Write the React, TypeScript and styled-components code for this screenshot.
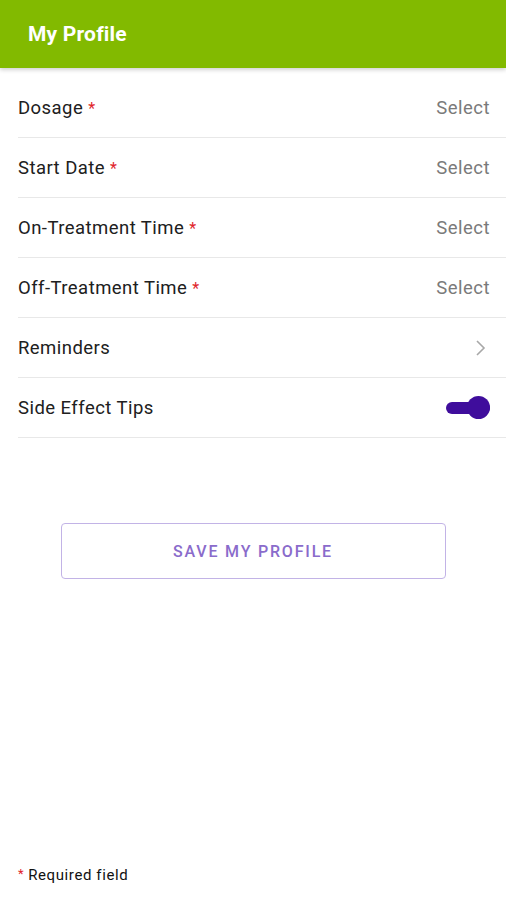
import * as React from "react";
import styled, { createGlobalStyle } from "styled-components";

const GlobalStyle = createGlobalStyle`
  html, body {
    margin: 0;
    padding: 0;
    background: #ffffff;
    font-family: Roboto, "Liberation Sans", sans-serif;
  }
  #root {
    min-height: 900px;
  }
`;

const rows: { label: string; required?: boolean; kind: "select" | "link" | "toggle" }[] = [
  { label: "Dosage", required: true, kind: "select" },
  { label: "Start Date", required: true, kind: "select" },
  { label: "On-Treatment Time", required: true, kind: "select" },
  { label: "Off-Treatment Time", required: true, kind: "select" },
  { label: "Reminders", kind: "link" },
  { label: "Side Effect Tips", kind: "toggle" },
];

const App: React.FC = () => {
  const [tips, setTips] = React.useState(true);

  return (
    <>
      <GlobalStyle />
      <Page>
        <Header>
          <Title>My Profile</Title>
        </Header>
        <List>
          {rows.map(({ label, required, kind }) => (
            <Row key={label}>
              <Label>
                {label}
                {required && <Star>*</Star>}
              </Label>
              {kind === "select" && <Value>Select</Value>}
              {kind === "link" && (
                <Chevron width="14" height="20" viewBox="0 0 14 20">
                  <path d="M3 3 L10 10 L3 17" fill="none" stroke="#a8a8a8" strokeWidth="1.6" />
                </Chevron>
              )}
              {kind === "toggle" && (
                <Switch on={tips} onClick={() => setTips(!tips)}>
                  <Thumb on={tips} />
                </Switch>
              )}
            </Row>
          ))}
        </List>
        <ButtonWrap>
          <SaveButton>SAVE MY PROFILE</SaveButton>
        </ButtonWrap>
        <Footer>
          <FootStar>*</FootStar>Required field
        </Footer>
      </Page>
    </>
  );
};

export default App;

const Page = styled.div`
  display: flex;
  flex-direction: column;
  min-height: 900px;
  background: #fff;
`;

const Header = styled.header`
  height: 68px;
  background: #82ba00;
  display: flex;
  align-items: center;
  padding: 0 28px;
  box-shadow: 0 2px 4px rgba(0, 0, 0, 0.18);
  position: relative;
  z-index: 1;
`;

const Title = styled.h1`
  margin: 0;
  color: #fff;
  font-size: 21px;
  font-weight: 700;
  letter-spacing: 0.2px;
`;

const List = styled.div`
  padding: 10px 0 0 18px;
`;

const Row = styled.div`
  height: 59px;
  display: flex;
  align-items: center;
  justify-content: space-between;
  padding-right: 16px;
  border-bottom: 1px solid #e8e8e8;
`;

const Label = styled.span`
  font-size: 18.5px;
  letter-spacing: 0.45px;
  color: #202020;
`;

const Star = styled.span`
  color: #e0242b;
  margin-left: 5px;
  font-size: 16px;
`;

const Value = styled.span`
  font-size: 18.5px;
  letter-spacing: 0.5px;
  color: #7a7a7a;
`;

const Chevron = styled.svg`
  margin-right: 2px;
`;

const Switch = styled.button<{ on: boolean }>`
  position: relative;
  width: 44px;
  height: 24px;
  padding: 0;
  border: none;
  background: transparent;
  cursor: pointer;
  &::before {
    content: "";
    position: absolute;
    left: 0;
    right: 0;
    top: 6px;
    height: 12px;
    border-radius: 6px;
    background: ${({ on }) => (on ? "#3f0d9c" : "#bdbdbd")};
  }
`;

const Thumb = styled.span<{ on: boolean }>`
  position: absolute;
  top: 0;
  left: ${({ on }) => (on ? "21px" : "0")};
  width: 23px;
  height: 23px;
  border-radius: 50%;
  background: ${({ on }) => (on ? "#3f0d9c" : "#f5f5f5")};
`;

const ButtonWrap = styled.div`
  display: flex;
  justify-content: center;
  padding-top: 85px;
`;

const SaveButton = styled.button`
  width: 385px;
  height: 56px;
  background: #fff;
  border: 1.5px solid #c2b3e6;
  border-radius: 4px;
  color: #8a6bcb;
  font-family: Roboto, "Liberation Sans", sans-serif;
  font-size: 16px;
  font-weight: 500;
  letter-spacing: 1.8px;
  cursor: pointer;
`;

const Footer = styled.div`
  margin-top: auto;
  padding: 0 0 16px 18px;
  font-size: 15px;
  font-weight: 400;
  letter-spacing: 0.6px;
  color: #111;
`;

const FootStar = styled.span`
  color: #e0242b;
  font-size: 13px;
  margin-right: 4px;
  vertical-align: 2px;
`;
